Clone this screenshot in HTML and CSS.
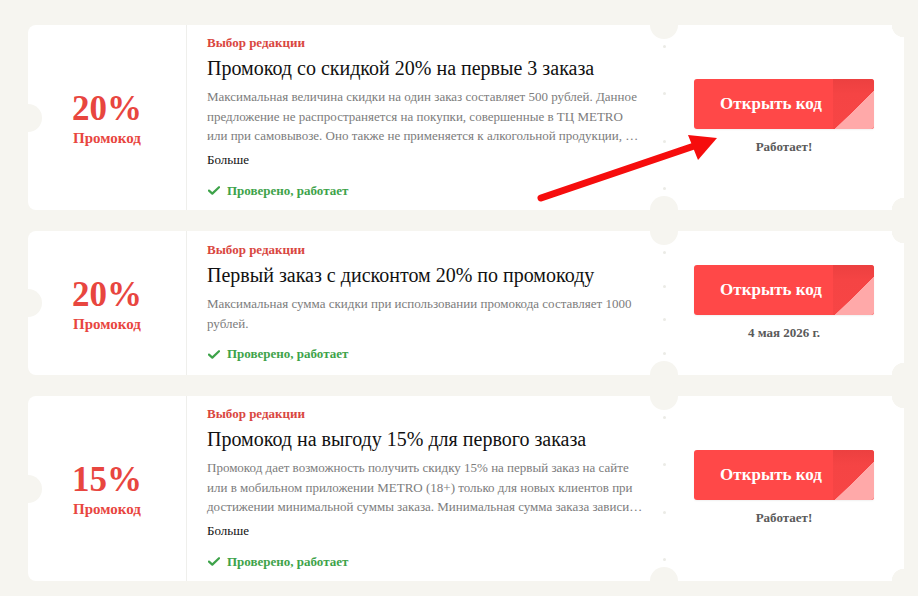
FILE: index.html
```html
<!DOCTYPE html>
<html lang="ru">
<head>
<meta charset="utf-8">
<title>Промокоды METRO</title>
<link rel="stylesheet" href="styles.css">
</head>
<body>
<main class="coupons">
  <article class="coupon">
    <div class="coupon-value">
      <div class="value-num">20%</div>
      <div class="value-type">Промокод</div>
    </div>
    <div class="coupon-body">
      <div class="coupon-tag">Выбор редакции</div>
      <h2 class="coupon-title">Промокод со скидкой 20% на первые 3 заказа</h2>
      <p class="coupon-desc">Максимальная величина скидки на один заказ составляет 500 рублей. Данное предложение не распространяется на покупки, совершенные в ТЦ METRO или при самовывозе. Оно также не применяется к алкогольной продукции, …</p>
      <a class="coupon-more">Больше</a>
      <div class="coupon-check"><svg class="check-icon" viewBox="0 0 12 9" width="12" height="9"><path d="M1 4.6 L4.3 7.6 L11 1.2" fill="none" stroke="#3ea34a" stroke-width="2.2" stroke-linecap="round" stroke-linejoin="round"/></svg>Проверено, работает</div>
    </div>
    <div class="coupon-sep"><i></i><i></i><i></i><i></i></div>
    <div class="coupon-action">
      <button class="open-btn"><span>Открыть код</span><b class="btn-fold"></b></button>
      <div class="coupon-status">Работает!</div>
    </div>
  </article>

  <article class="coupon">
    <div class="coupon-value">
      <div class="value-num">20%</div>
      <div class="value-type">Промокод</div>
    </div>
    <div class="coupon-body">
      <div class="coupon-tag">Выбор редакции</div>
      <h2 class="coupon-title">Первый заказ с дисконтом 20% по промокоду</h2>
      <p class="coupon-desc">Максимальная сумма скидки при использовании промокода составляет 1000 рублей.</p>
      <div class="coupon-check"><svg class="check-icon" viewBox="0 0 12 9" width="12" height="9"><path d="M1 4.6 L4.3 7.6 L11 1.2" fill="none" stroke="#3ea34a" stroke-width="2.2" stroke-linecap="round" stroke-linejoin="round"/></svg>Проверено, работает</div>
    </div>
    <div class="coupon-sep"><i></i><i></i><i></i><i></i></div>
    <div class="coupon-action">
      <button class="open-btn"><span>Открыть код</span><b class="btn-fold"></b></button>
      <div class="coupon-status">4 мая 2026 г.</div>
    </div>
  </article>

  <article class="coupon">
    <div class="coupon-value">
      <div class="value-num">15%</div>
      <div class="value-type">Промокод</div>
    </div>
    <div class="coupon-body">
      <div class="coupon-tag">Выбор редакции</div>
      <h2 class="coupon-title">Промокод на выгоду 15% для первого заказа</h2>
      <p class="coupon-desc">Промокод дает возможность получить скидку 15% на первый заказ на сайте или в мобильном приложении METRO (18+) только для новых клиентов при достижении минимальной суммы заказа. Минимальная сумма заказа зависи…</p>
      <a class="coupon-more">Больше</a>
      <div class="coupon-check"><svg class="check-icon" viewBox="0 0 12 9" width="12" height="9"><path d="M1 4.6 L4.3 7.6 L11 1.2" fill="none" stroke="#3ea34a" stroke-width="2.2" stroke-linecap="round" stroke-linejoin="round"/></svg>Проверено, работает</div>
    </div>
    <div class="coupon-sep"><i></i><i></i><i></i><i></i></div>
    <div class="coupon-action">
      <button class="open-btn"><span>Открыть код</span><b class="btn-fold"></b></button>
      <div class="coupon-status">Работает!</div>
    </div>
  </article>
</main>

<svg class="pointer-arrow" width="918" height="596" viewBox="0 0 918 596">
  <line x1="541" y1="198" x2="700" y2="144" stroke="#f60d0d" stroke-width="7" stroke-linecap="round"/>
  <polygon points="717,138 688,135 698,160" fill="#f60d0d"/>
</svg>
</body>
</html>
```

FILE: styles.css
```css
* { box-sizing: border-box; }

html, body {
  margin: 0;
  padding: 0;
}

body {
  position: relative;
  background: #f6f5f0;
  font-family: "Liberation Serif", "Times New Roman", serif;
  color: #111;
  width: 918px;
  height: 596px;
  overflow: hidden;
}

.coupons {
  display: flex;
  flex-direction: column;
  gap: 21px;
  padding: 25px 14px 0 28px;
}

/* ticket card */
.coupon {
  position: relative;
  display: flex;
  min-height: 144px;
  background: #fff;
  border-radius: 8px 0 0 8px;
}

/* left notch */
.coupon::before {
  content: "";
  position: absolute;
  left: -14px;
  top: 50%;
  width: 28px;
  height: 28px;
  margin-top: -14px;
  border-radius: 50%;
  background: #f6f5f0;
}

.coupon-value {
  width: 159px;
  flex: none;
  border-right: 1px solid #efefec;
  display: flex;
  flex-direction: column;
  align-items: center;
  justify-content: center;
  color: #e8463f;
  font-weight: bold;
  padding-top: 3px;
}

.value-num {
  font-size: 35px;
  line-height: 35px;
}

.value-type {
  font-size: 15px;
  line-height: 18px;
  margin-top: 3px;
}

.coupon-body {
  flex: 1;
  min-width: 0;
  display: flex;
  flex-direction: column;
  justify-content: center;
  padding: 9px 20px 10px 20px;
}

.coupon-tag {
  font-size: 13px;
  line-height: 18px;
  font-weight: bold;
  color: #d9473f;
}

.coupon-title {
  margin: 3px 0 0;
  font-size: 20px;
  line-height: 26px;
  font-weight: normal;
  color: #111;
}

.coupon-desc {
  margin: 6px 0 0;
  font-size: 13px;
  line-height: 19.5px;
  color: #7c7c7c;
}

.coupon-more {
  display: block;
  margin-top: 4.5px;
  font-size: 13px;
  line-height: 19.5px;
  color: #111;
}

.coupon-check {
  display: flex;
  align-items: center;
  margin-top: 11px;
  font-size: 13px;
  line-height: 19.5px;
  font-weight: bold;
  color: #3ea34a;
}

.check-icon {
  margin: 0 7px 0 1px;
  flex: none;
}

/* dotted tear line */
.coupon-sep {
  width: 3px;
  margin: 0 -1.5px;
  flex: none;
  display: flex;
  flex-direction: column;
  justify-content: space-between;
  padding: 20px 0;
  position: relative;
  z-index: 1;
}

.coupon-sep i {
  display: block;
  width: 3px;
  height: 3px;
  border-radius: 50%;
  background: #ebebe6;
}

.coupon-action {
  position: relative;
  width: 240px;
  flex: none;
  display: flex;
  flex-direction: column;
  align-items: center;
  justify-content: center;
  background:
    radial-gradient(circle at 100% 0, #f6f5f0 12px, transparent 12.5px),
    radial-gradient(circle at 100% 100%, #f6f5f0 12px, transparent 12.5px),
    #fff;
}

/* half circles on the tear line */
.coupon-action::before,
.coupon-action::after {
  content: "";
  position: absolute;
  left: -14px;
  width: 28px;
  height: 28px;
  border-radius: 50%;
  background: #f6f5f0;
}

.coupon-action::before { top: -14px; }
.coupon-action::after { bottom: -14px; }

.open-btn {
  position: relative;
  display: flex;
  align-items: center;
  width: 180px;
  height: 50px;
  padding: 0 26px 0 0;
  border: 0;
  border-radius: 3px;
  background: #ff4848;
  overflow: hidden;
  font-family: "Liberation Serif", "Times New Roman", serif;
  font-size: 17px;
  font-weight: bold;
  color: #fff;
  box-shadow: 0 1px 2px rgba(0, 0, 0, 0.06);
}

.open-btn span {
  position: relative;
  z-index: 1;
  flex: 1;
  text-align: center;
}

/* peeled corner */
.btn-fold {
  position: absolute;
  top: 0;
  right: 0;
  width: 41px;
  height: 50px;
  background: linear-gradient(to bottom, #ec4040, #f54444 30%, #f74545);
}

.btn-fold::after {
  content: "";
  position: absolute;
  right: 0;
  bottom: 0;
  width: 39px;
  height: 38px;
  background: linear-gradient(to top left, #ffa9a9 50%, transparent 50.5%);
}

.coupon-status {
  margin-top: 9px;
  font-size: 13px;
  line-height: 18px;
  font-weight: bold;
  color: #5a5a5a;
}

.pointer-arrow {
  position: absolute;
  left: 0;
  top: 0;
  pointer-events: none;
}
```
